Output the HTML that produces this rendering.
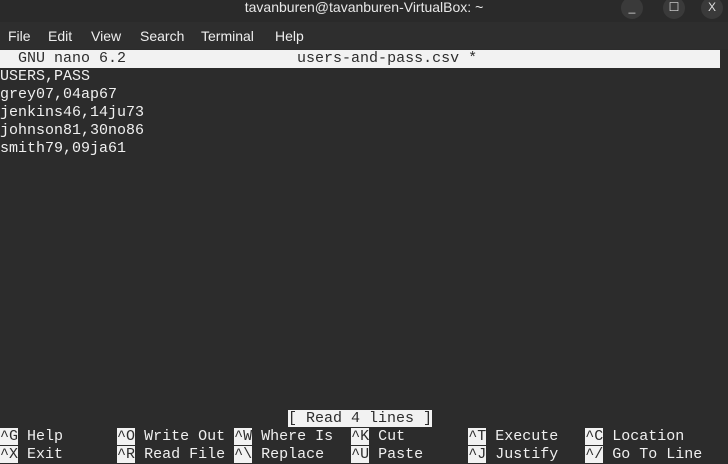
<!DOCTYPE html>
<html><head><style>
*{margin:0;padding:0;box-sizing:border-box}
body{width:728px;height:461px;background:#2c2c2c;overflow:hidden;position:relative;font-family:"Liberation Mono",monospace;color:#f0f0f0}
#title{position:absolute;left:0;top:0;width:728px;height:22px;background:#2a2a2a;color:#e8e8e8;font:14px "Liberation Sans",sans-serif;text-align:center;line-height:15px}
.btn{position:absolute;top:-3px;width:22px;height:22px;border-radius:11px;background:#3a3a3a;color:#ddd;font:12px "Liberation Sans",sans-serif;text-align:center;line-height:20px}
#menu{position:absolute;left:0;top:22px;width:728px;height:27px;background:#2e2e2e;font:14px "Liberation Sans",sans-serif;color:#eee}
#menu span{position:absolute;top:6px}
.row{position:absolute;left:0;height:18px;line-height:18px;font-size:15px;white-space:pre}
#hdr{top:50px;width:720px;background:#f2f2f2;color:#2c2c2c}
.inv{background:#f2f2f2;color:#2c2c2c}
</style></head><body>
<div id="title">tavanburen@tavanburen-VirtualBox: ~
<div class="btn" style="left:621px">_</div><div class="btn" style="left:663px">☐</div><div class="btn" style="left:701px">X</div></div>
<div id="menu"><span style="left:8px">File</span><span style="left:48px">Edit</span><span style="left:91px">View</span><span style="left:140px">Search</span><span style="left:201px">Terminal</span><span style="left:275px">Help</span></div>
<div class="row" id="hdr">  GNU nano 6.2                   users-and-pass.csv *</div>
<div class="row" style="top:68px">USERS,PASS</div>
<div class="row" style="top:86px">grey07,04ap67</div>
<div class="row" style="top:104px">jenkins46,14ju73</div>
<div class="row" style="top:122px">johnson81,30no86</div>
<div class="row" style="top:140px">smith79,09ja61</div>
<div class="row" style="top:410px;left:288px"><span class="inv">[ Read 4 lines ]</span></div>
<div class="row" style="top:428px"><span class="inv">^G</span> Help      <span class="inv">^O</span> Write Out <span class="inv">^W</span> Where Is  <span class="inv">^K</span> Cut       <span class="inv">^T</span> Execute   <span class="inv">^C</span> Location</div>
<div class="row" style="top:446px"><span class="inv">^X</span> Exit      <span class="inv">^R</span> Read File <span class="inv">^\</span> Replace   <span class="inv">^U</span> Paste     <span class="inv">^J</span> Justify   <span class="inv">^/</span> Go To Line</div>
</body></html>
